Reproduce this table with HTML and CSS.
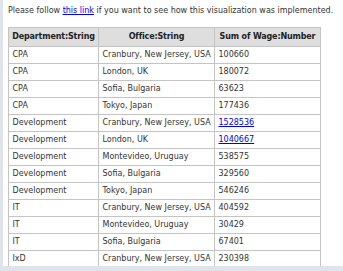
FILE: index.html
```html
<!DOCTYPE html>
<html lang="en">
<head>
  <meta charset="UTF-8" />
  <title>Sum of Wage</title>
  <link rel="stylesheet" href="styles.css">
</head>
<body>
  <div class="frame">
    <p class="note">Please follow <a href="#">this link</a> if you want to see how this visualization was implemented.</p>

    <table class="pivot">
      <thead>
        <tr>
          <th class="c1">Department:String</th>
          <th class="c2">Office:String</th>
          <th class="c3">Sum of Wage:Number</th>
        </tr>
      </thead>
      <tbody>
        <tr><td>CPA</td><td>Cranbury, New Jersey, USA</td><td>100660</td></tr>
        <tr><td>CPA</td><td>London, UK</td><td>180072</td></tr>
        <tr><td>CPA</td><td>Sofia, Bulgaria</td><td>63623</td></tr>
        <tr><td>CPA</td><td>Tokyo, Japan</td><td>177436</td></tr>
        <tr><td>Development</td><td>Cranbury, New Jersey, USA</td><td><a href="#">1528536</a></td></tr>
        <tr><td>Development</td><td>London, UK</td><td><a href="#">1040667</a></td></tr>
        <tr><td>Development</td><td>Montevideo, Uruguay</td><td>538575</td></tr>
        <tr><td>Development</td><td>Sofia, Bulgaria</td><td>329560</td></tr>
        <tr><td>Development</td><td>Tokyo, Japan</td><td>546246</td></tr>
        <tr><td>IT</td><td>Cranbury, New Jersey, USA</td><td>404592</td></tr>
        <tr><td>IT</td><td>Montevideo, Uruguay</td><td>30429</td></tr>
        <tr><td>IT</td><td>Sofia, Bulgaria</td><td>67401</td></tr>
        <tr><td>IxD</td><td>Cranbury, New Jersey, USA</td><td>230398</td></tr>
      </tbody>
    </table>
  </div>
</body>
</html>
```

FILE: styles.css
```css
body {
  margin: 0;
  background: #fff;
  font-family: Verdana, "DejaVu Sans", sans-serif;
  font-size: 8px;
  color: #333;
}

/* рамка вокруг содержимого */
.frame {
  height: 266px;
  overflow: hidden;
  border-left: 3px solid #dfe4ea;
  border-bottom: 5px solid #dfe4ea;
  padding-left: 5px;
}

.note {
  margin: 0;
  padding-top: 6px;
  line-height: 10px;
  white-space: nowrap;
}

.note a, .pivot a {
  color: #0000ee;
}

/* таблица */
.pivot {
  margin-top: 11px;
  border-collapse: collapse;
  table-layout: fixed;
  width: 312px;
}

.pivot th, .pivot td {
  border: 1px solid #c4c4c4;
  padding: 3px 3.5px;
  line-height: 10px;
  text-align: left;
  white-space: nowrap;
  overflow: hidden;
}

.pivot th {
  background: #dedede;
  color: #222;
  text-align: center;
  font-weight: bold;
  letter-spacing: -0.15px;
  padding: 4px 2px;
}

.c1 { width: 85px; }
.c2 { width: 111px; }
.c3 { width: 101px; }
```
